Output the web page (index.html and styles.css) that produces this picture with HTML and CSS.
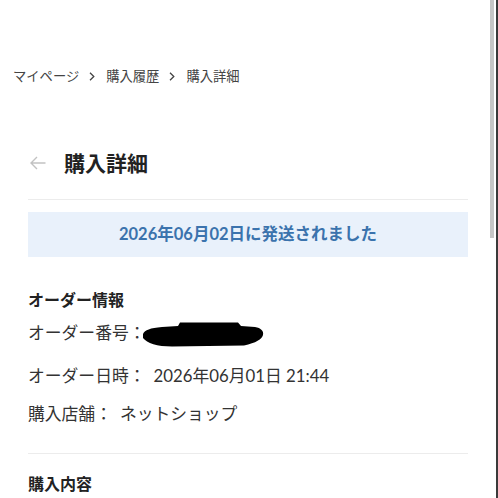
FILE: index.html
```html
<!DOCTYPE html>
<html lang="ja">
<head>
<meta charset="utf-8">
<title>購入詳細</title>
<link rel="stylesheet" href="styles.css">
</head>
<body>
<nav class="breadcrumb">
  <span>マイページ</span>
  <svg class="sep" width="6" height="9" viewBox="0 0 6 9"><path d="M1 0.8L4.8 4.5L1 8.2" fill="none" stroke="#444" stroke-width="1.3"/></svg>
  <span>購入履歴</span>
  <svg class="sep" width="6" height="9" viewBox="0 0 6 9"><path d="M1 0.8L4.8 4.5L1 8.2" fill="none" stroke="#444" stroke-width="1.3"/></svg>
  <span>購入詳細</span>
</nav>
<main class="page">
  <header class="titlebar">
    <svg class="back" width="16" height="14" viewBox="0 0 16 14"><path d="M15.5 7H1M7 1L1 7L7 13" fill="none" stroke="#c2c2c2" stroke-width="1.4"/></svg>
    <h1 class="title">購入詳細</h1>
  </header>
  <div class="banner">2026年06月02日に発送されました</div>
  <section class="info">
    <h2 class="heading">オーダー情報</h2>
    <div class="row row-first"><span>オーダー番号：</span><svg class="redact" width="122" height="25" viewBox="0 0 122 25"><path d="M1,12 C3,8 8,6 20,5 L36,4 L38,0.5 L96,0.5 L99,4 L113,5 C119,6 122,9 121,13 C120,17 114,21 102,23.5 L30,24.5 C15,24.5 5,21 1,16 Z" fill="#000"/></svg></div>
    <div class="row"><span>オーダー日時：</span><span class="val">2026年06月01日 21:44</span></div>
    <div class="row"><span>購入店舗：</span><span class="val">ネットショップ</span></div>
  </section>
  <section class="contents">
    <h2 class="heading">購入内容</h2>
  </section>
</main>
<div class="scrollbar"><div class="thumb"></div></div>
</body>
</html>
```
FILE: styles.css
```css
html, body { margin: 0; padding: 0; background: #fff; }
body {
  font-family: Lato, "Noto Sans CJK JP", sans-serif;
  color: #222;
  overflow: hidden;
  height: 498px;
}
.breadcrumb {
  padding: 66px 13px 0;
  font-size: 13.3px;
  line-height: 20px;
  color: #444;
  display: flex;
  align-items: center;
}
.breadcrumb .sep {
  margin: 0 11px 0 10px;
}
.page {
  width: 440px;
  margin-left: 28px;
}
.titlebar {
  display: flex;
  align-items: center;
  margin-top: 62px;
  height: 30px;
  padding-bottom: 21px;
  border-bottom: 1px solid #ececec;
}
.back { margin-left: 2px; margin-right: 18px; }
.title {
  margin: 0;
  font-size: 21px;
  font-weight: 700;
  line-height: 30px;
  color: #222;
}
.banner {
  margin-top: 12px;
  height: 45px;
  line-height: 45px;
  background: #e9f1fb;
  color: #3b73ad;
  font-weight: 700;
  font-size: 16.5px;
  text-align: center;
}
.info {
  padding-top: 31px;
  padding-bottom: 27px;
  border-bottom: 1px solid #ececec;
}
.heading {
  margin: 0;
  font-size: 16px;
  font-weight: 700;
  line-height: 24px;
  color: #222;
}
.row {
  display: flex;
  align-items: flex-start;
  font-size: 16.8px;
  line-height: 24px;
  color: #333;
  margin-top: 14px;
}
.row-first { margin-top: 9px; height: 29px; }
.row .val { margin-left: 8px; }
.redact { margin-top: 1px; margin-left: -3px; }
.contents { padding-top: 18px; }
.scrollbar {
  position: fixed;
  top: 0;
  right: 0;
  width: 9px;
  height: 498px;
  background: #fff;
  border-right: 2px solid #3a3a3a;
  box-sizing: border-box;
}
.thumb {
  margin-left: 1px;
  width: 4px;
  height: 238px;
  background: #c6c6c6;
}
```
